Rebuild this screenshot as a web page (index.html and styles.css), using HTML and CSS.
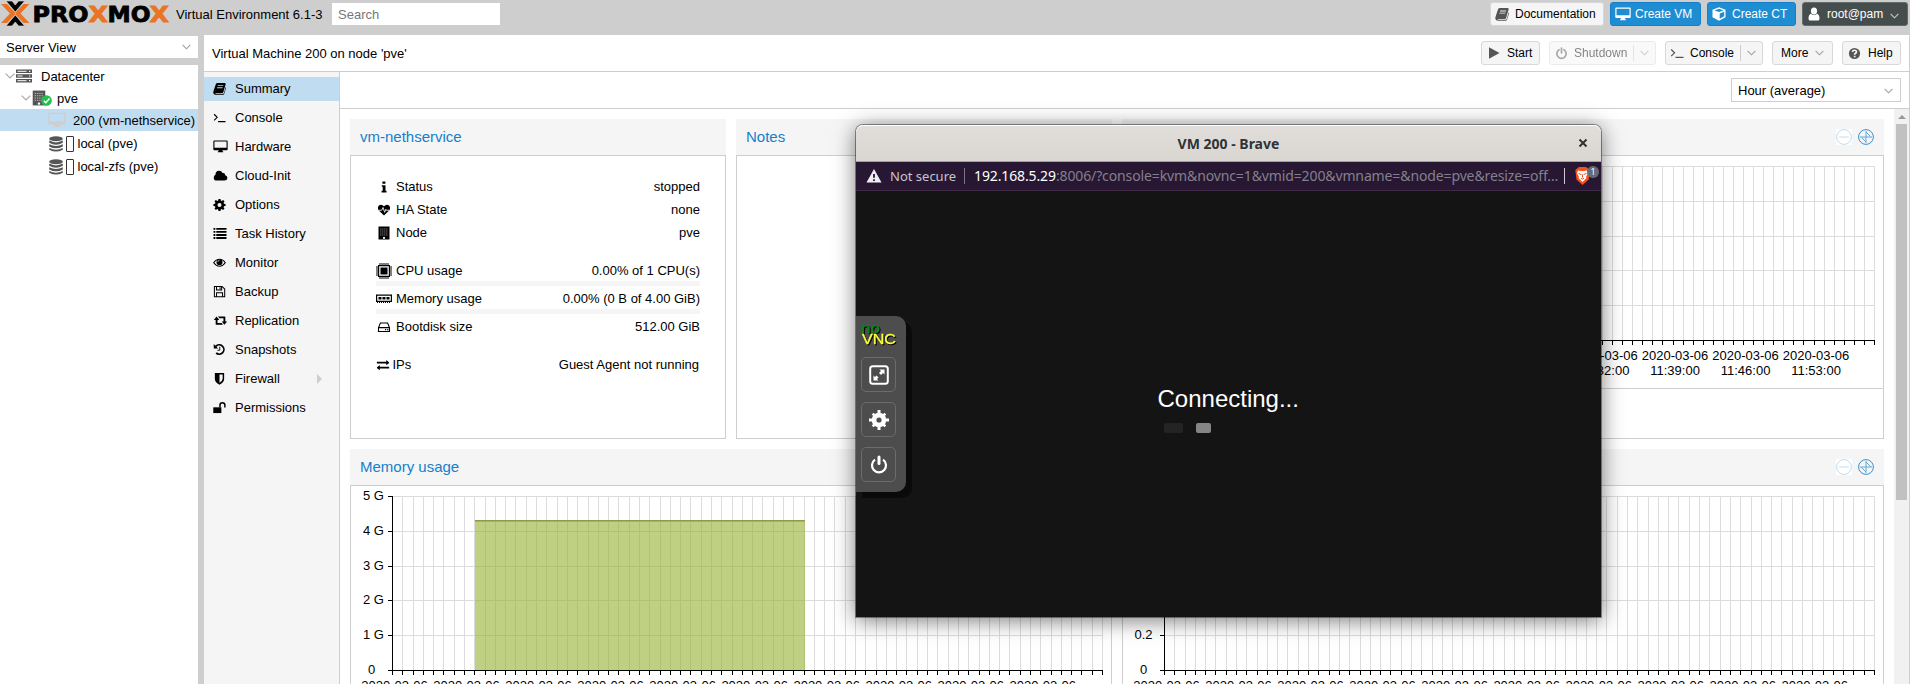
FILE: index.html
```html
<!DOCTYPE html>
<html lang="en">
<head>
<meta charset="utf-8">
<title>pve - Proxmox Virtual Environment</title>
<link rel="stylesheet" href="styles.css">
</head>
<body>
<svg class="sprite" aria-hidden="true">
  <symbol id="book" viewBox="0 0 14 14"><path fill-rule="evenodd" d="M5 1h7.5q1.5.1 1.1 1.5l-2.500 8.500q-.3 1-1.400 1H2.400q.1.800 1 .8h7.300q.8 0 1-.8l2-6.700q.5.400.3 1.200l-2 6.300q-.3 1-1.400 1H2.700Q.5 13.600.3 11.500l.1-1.300L3 2.300Q3.500 1 5 1zM5.300 3.500l-.3.900h5.900l.3-.900zM4.600 5.700l-.3.900h5.900l.3-.900z"/></symbol>
  <symbol id="term" viewBox="0 0 14 14"><path fill="none" stroke="currentColor" stroke-width="1.200" d="M1.200 3.500 4.500 6.800 1.200 10.100M5.500 11.400h8"/></symbol>
  <symbol id="desktop" viewBox="0 0 16 14"><path fill-rule="evenodd" d="M1.300.5h13.400q1 0 1 1v8.500q0 1-1 1H10q0 1.200.9 1.400v.9H5.100v-.9Q6 12.200 6 11H1.300q-1 0-1-1V1.500q0-1 1-1zM1.500 1.700v6.600h13V1.700z"/></symbol>
  <symbol id="cloud" viewBox="0 0 15 14"><path d="M3.600 12.500Q.2 12.300.2 9.300.3 7.200 2.100 6.300 2 2.300 5.800 2 8.600 1.900 9.800 4.300 12.300 3.800 12.600 6.600 14.900 7.200 14.900 9.500 14.800 12.300 11.900 12.500z"/></symbol>
  <symbol id="cog" viewBox="0 0 14 14"><path fill-rule="evenodd" d="M5.900 1h2.200l.3 1.700 1 .4 1.500-1 1.500 1.500-1 1.500.4 1 1.700.3v2.200l-1.700.3-.4 1 1 1.500-1.500 1.500-1.500-1-1 .4-.3 1.700H5.900l-.3-1.700-1-.4-1.500 1-1.500-1.500 1-1.500-.4-1L.5 8.600V6.400l1.700-.3.400-1-1-1.500 1.500-1.500 1.500 1 1-.4zM7 5.300a2.200 2.200 0 1 0 0 4.400 2.200 2.200 0 0 0 0-4.400z"/></symbol>
  <symbol id="list" viewBox="0 0 14 14"><path d="M0 1h2v2H0zM3 1h11v2H3zM0 4.300h2v2H0zM3 4.300h11v2H3zM0 7.600h2v2H0zM3 7.600h11v2H3zM0 10.900h2v2H0zM3 10.900h11v2H3z"/></symbol>
  <symbol id="eye" viewBox="0 0 14 14"><path fill="none" stroke="currentColor" stroke-width="1.200" d="M.8 7.300Q3.300 3.500 7 3.500t6.200 3.800Q10.700 11 7 11T.8 7.300z"/><circle cx="7" cy="6.600" r="3.200"/><path d="M5.100 6.500Q5.200 4.700 7 4.700" stroke="#f5f5f5" stroke-width=".7" fill="none"/></symbol>
  <symbol id="save" viewBox="0 0 14 14"><path fill="none" stroke="currentColor" stroke-width="1.100" d="M1.500 1.600h8.300l2.800 2.800v8.200H1.500zM3.800 1.800v3.600h5.500V1.800M3.800 12.400V8.300h6.500v4.100M7.600 2.500v2"/></symbol>
  <symbol id="retweet" viewBox="0 0 15 14"><path d="M3.300 2.800 6.200 6.400H4.300v3.300h4.400l1.500 1.900H2.800q-.5 0-.5-.5V6.400H.3zM4.800 2.800h7.400q.5 0 .5.500V8h2l-3 3.600L8.800 8h1.900V4.700H6.300z"/></symbol>
  <symbol id="history" viewBox="0 0 14 14"><path fill="none" stroke="currentColor" stroke-width="1.900" d="M3 3.700A5 5 0 1 1 3.400 10.800"/><path d="M.8 1v4.800h4.800z"/><path d="M7.300 4v3.800H4.800" fill="none" stroke="currentColor"/></symbol>
  <symbol id="shield" viewBox="0 0 14 14"><path fill-rule="evenodd" d="M2 1h10v6.500q-.2 3.700-5 6.200Q2.200 11.200 2 7.500zM7 2.700v9q3.300-2 3.400-4.300V2.700z"/></symbol>
  <symbol id="unlock" viewBox="0 0 14 14"><path d="M.3 6.800h8.700v6.200H.3z"/><path fill="none" stroke="currentColor" stroke-width="1.600" d="M7.500 7V4.500a2.600 2.600 0 0 1 5.300 0V7"/></symbol>
  <symbol id="info" viewBox="0 0 14 14"><path d="M5.300 1h3.200v2.500H5.300zM4.600 5h4v6h1.100v1.800H4.400V11h1.200V6.800h-1z"/></symbol>
  <symbol id="heart" viewBox="0 0 14 14"><path d="M7 13 1.500 7.600Q.2 6 .4 4.200.9 1.500 3.500 1.300 5.500 1.200 7 3 8.500 1.200 10.500 1.300 13.100 1.500 13.600 4.200q.2 1.800-1.100 3.400z"/><path d="M1 7.300h3.500L6 4.300l1.700 5.200 1.200-3.300.6 1.100h3" fill="none" stroke="#fff" stroke-width=".9"/></symbol>
  <symbol id="building" viewBox="0 0 12 14"><path d="M.5.500h11v13h-11z"/><path d="M2.200 3h7.600M2.200 5h7.600M2.200 7h7.600M2.200 9h7.600" stroke="#fff" stroke-width=".8" stroke-dasharray="1.200 .8" opacity=".65"/><path fill="#fff" d="M5 11h2v1.800H5z"/></symbol>
  <symbol id="cpu" viewBox="0 0 16 16"><path d="M4.500 4.500h7v7h-7z"/><path fill="none" stroke="currentColor" stroke-width="1.200" d="M2.600 2.600h10.800v10.800H2.600z"/><path stroke="currentColor" stroke-width="2" stroke-dasharray="1 1" d="M3.500 1h9M3.500 15h9M1 3.500v9M15 3.500v9"/></symbol>
  <symbol id="ram" viewBox="0 0 16 10"><path fill="none" stroke="currentColor" stroke-width="1.200" d="M.6 1.100h14.800v6.300H.6z"/><path d="M2.500 3h3v2.600h-3zM6.500 3h3v2.600h-3zM10.500 3h3v2.600h-3z"/><path stroke="currentColor" stroke-width="1.200" stroke-dasharray="1 1" d="M1 8.400h14"/></symbol>
  <symbol id="disk" viewBox="0 0 14 14"><path fill="none" stroke="currentColor" stroke-width="1.100" d="M1.500 7.600 3.400 3h7.200l1.900 4.600v3.900h-11zM1.500 7.600h11"/><path d="M8 9h1.200v1.200H8zM10.200 9h1.200v1.200h-1.200z"/></symbol>
  <symbol id="exchange" viewBox="0 0 14 14"><path d="M0 3.600h10.500V1.700L14 4.500l-3.500 2.700V5.400H0zM14 8.900H3.500V7.100L0 9.900l3.500 2.700v-1.900H14z"/></symbol>
  <symbol id="cube" viewBox="0 0 14 14"><path fill-rule="evenodd" d="M7 .3 13.500 2.700v7.500L7 13.700.5 10.200V2.700zM7 1.700 2.500 3.400 7 5.100l4.500-1.700zM7.700 6.400v5.300l4.500-2.400V4.700z"/></symbol>
  <symbol id="user" viewBox="0 0 12 14"><ellipse cx="6" cy="4" rx="3.100" ry="3.600"/><path d="M2.800 6.700Q6 9.300 9.200 6.700q2.300 1 2.300 4.700 0 2.200-1.800 2.200H2.300Q.5 13.600.5 11.400q0-3.700 2.300-4.700z"/></symbol>
  <symbol id="play" viewBox="0 0 12 14"><path d="M1 1.300 11.500 7 1 12.700z"/></symbol>
  <symbol id="power" viewBox="0 0 14 14"><path fill="none" stroke="currentColor" stroke-width="1.900" stroke-linecap="round" d="M4.300 3a5 5 0 1 0 5.400 0M7 1.200v5"/></symbol>
  <symbol id="help" viewBox="0 0 14 14"><circle cx="7" cy="7" r="6"/><path fill="none" stroke="#f5f5f5" stroke-width="1.800" d="M4.700 5.300Q5 3.500 7 3.500t2.200 1.700Q9.200 6.200 7.200 7.500v.9M7.200 9.300v1.700"/></symbol>
  <symbol id="down" viewBox="0 0 10 6"><path fill="none" stroke="currentColor" stroke-width="1.200" d="M.7.700 5 5 9.300.7"/></symbol>
  <symbol id="db" viewBox="0 0 14 16"><ellipse cx="7" cy="2.700" rx="6.800" ry="2.500"/><path d="M.2 4.600Q7 8.200 13.800 4.600v2.100Q7 10.700.2 6.700zM.2 8.300q6.800 3.600 13.600 0v2.100Q7 14.200.2 10.400zM.2 12q6.800 3.600 13.600 0v1.700Q7 17.400.2 13.700z"/></symbol>
  <symbol id="server" viewBox="0 0 16 14"><path d="M0 .5h16v3.600H0zM0 5.200h16v3.600H0zM0 9.900h16v3.600H0z"/><path stroke="#fff" d="M1.500 2.300h9M1.500 7h5M1.500 11.700h9"/><path stroke="#fff" stroke-width="1.200" d="M13 2.300h1.300M13 7h1.300M13 11.700h1.300"/></symbol>
  <symbol id="minus" viewBox="0 0 16 16"><path fill="#fff" stroke="none" d="M0 0h16v16H0z"/><circle cx="8" cy="8" r="7.400"/><path d="M3.200 8h9.600"/></symbol>
  <symbol id="zoomreset" viewBox="0 0 16 16"><circle cx="8" cy="8" r="7.400"/><path stroke="#62a7d6" d="M8 2v12M2 8h12M8 3l4.500 4.500M8 13 3.500 8.500"/></symbol>
</svg>

<header class="top">
  <svg class="logo" width="170" height="27" viewBox="0 0 170 27">
    <path fill="#e97425" d="M1 4h6l9 9.500L7 23H1l9-9.500zM29.500 4h-6l-9 9.500 9 9.500h6l-9-9.500z"/>
    <path fill="#000" stroke="#cecece" stroke-width=".7" d="M6 1h6l3.300 4L18.600 1h6l-9.300 11zM6 26h6l3.300-4 3.300 4h6l-9.300-11z"/>
    <g class="wordmark"><text x="32.500" y="21.500" textLength="56" lengthAdjust="spacingAndGlyphs">PRO</text><text class="x" x="88.500" y="21.500" textLength="19.500" lengthAdjust="spacingAndGlyphs">X</text><text x="107.500" y="21.500" textLength="43" lengthAdjust="spacingAndGlyphs">MO</text><text class="x" x="149.500" y="21.500" textLength="19.500" lengthAdjust="spacingAndGlyphs">X</text></g>
  </svg>
  <span class="version">Virtual Environment 6.1-3</span>
  <div class="search">Search</div>
  <div class="top-actions">
    <div class="btn doc"><svg width="14" height="14"><use href="#book"/></svg><span>Documentation</span></div>
    <div class="btn blue vm"><svg width="16" height="14"><use href="#desktop"/></svg><span>Create VM</span></div>
    <div class="btn blue ct"><svg width="14" height="14"><use href="#cube"/></svg><span>Create CT</span></div>
    <div class="btn user"><svg width="12" height="14"><use href="#user"/></svg><span>root@pam</span><svg class="caret" width="9" height="6"><use href="#down"/></svg></div>
  </div>
</header>

<div class="workspace">
  <aside class="side">
    <div class="view-select"><span>Server View</span><svg class="caret" width="9" height="6"><use href="#down"/></svg></div>
    <div class="tree">
      <div class="row"><svg class="arrow" width="10" height="6"><use href="#down"/></svg><svg class="ico" width="16" height="14"><use href="#server"/></svg><span class="t-dc">Datacenter</span></div>
      <div class="row d1"><svg class="arrow" width="10" height="6"><use href="#down"/></svg><span class="node"><svg class="ico" width="14" height="16"><use href="#building"/></svg><svg class="ok" width="11" height="11" viewBox="0 0 11 11"><circle cx="5.500" cy="5.500" r="5.300" fill="#21bf4b"/><path d="m2.800 5.700 2 2 3.700-4.200" fill="none" stroke="#fff" stroke-width="1.500"/></svg></span><span>pve</span></div>
      <div class="row d2 sel"><svg width="18" height="16"><use href="#desktop"/></svg><span>200 (vm-nethservice)</span></div>
      <div class="row d2 st"><svg class="ico" width="14" height="16"><use href="#db"/></svg><i class="box"></i><span>local (pve)</span></div>
      <div class="row d2 st"><svg class="ico" width="14" height="16"><use href="#db"/></svg><i class="box"></i><span>local-zfs (pve)</span></div>
    </div>
  </aside>

  <main class="main">
    <div class="title">
      <span>Virtual Machine 200 on node 'pve'</span>
      <div class="vm-actions">
        <div class="btn start"><svg width="12" height="14"><use href="#play"/></svg><span>Start</span></div>
        <div class="btn shutdown"><svg width="13" height="13"><use href="#power"/></svg><span>Shutdown</span><i class="split"></i><svg class="caret" width="9" height="6"><use href="#down"/></svg></div>
        <div class="btn console"><svg width="14" height="14"><use href="#term"/></svg><span>Console</span><i class="split"></i><svg class="caret" width="9" height="6"><use href="#down"/></svg></div>
        <div class="btn more"><span>More</span><svg class="caret" width="9" height="6"><use href="#down"/></svg></div>
        <div class="btn help"><svg width="13" height="13"><use href="#help"/></svg><span>Help</span></div>
      </div>
    </div>
    <div class="content">
      <nav class="nav">
        <div class="item on"><svg width="13" height="13"><use href="#book"/></svg>Summary</div>
        <div class="item"><svg width="13" height="13"><use href="#term"/></svg>Console</div>
        <div class="item"><svg width="15" height="13"><use href="#desktop"/></svg>Hardware</div>
        <div class="item"><svg width="15" height="13"><use href="#cloud"/></svg>Cloud-Init</div>
        <div class="item"><svg width="13" height="13"><use href="#cog"/></svg>Options</div>
        <div class="item"><svg width="14" height="13"><use href="#list"/></svg>Task History</div>
        <div class="item"><svg width="13" height="13"><use href="#eye"/></svg>Monitor</div>
        <div class="item"><svg width="13" height="13"><use href="#save"/></svg>Backup</div>
        <div class="item"><svg width="15" height="13"><use href="#retweet"/></svg>Replication</div>
        <div class="item"><svg width="13" height="13"><use href="#history"/></svg>Snapshots</div>
        <div class="item"><svg width="13" height="13"><use href="#shield"/></svg>Firewall<i class="sub"></i></div>
        <div class="item"><svg width="13" height="13"><use href="#unlock"/></svg>Permissions</div>
      </nav>
      <section class="view">
        <div class="toolbar"><div class="combo"><span>Hour (average)</span><svg class="caret" width="9" height="6"><use href="#down"/></svg></div></div>
        <div class="scroll">
          <div class="panels">
            <div class="panel status">
              <h2>vm-nethservice</h2>
              <div class="body info">
                <div class="stat"><svg width="14" height="13"><use href="#info"/></svg><span>Status</span><b>stopped</b></div>
                <div class="stat"><svg width="14" height="13"><use href="#heart"/></svg><span>HA State</span><b>none</b></div>
                <div class="stat"><svg width="14" height="14"><use href="#building"/></svg><span>Node</span><b>pve</b></div>
                <div class="stat gap"><svg width="16" height="16"><use href="#cpu"/></svg><span>CPU usage</span><b>0.00% of 1 CPU(s)</b></div>
                <i class="meter"></i>
                <div class="stat"><svg width="16" height="10"><use href="#ram"/></svg><span>Memory usage</span><b>0.00% (0 B of 4.00 GiB)</b></div>
                <i class="meter"></i>
                <div class="stat"><svg width="14" height="14"><use href="#disk"/></svg><span>Bootdisk size</span><b>512.00 GiB</b></div>
                <div class="stat gap ips"><svg width="13" height="14"><use href="#exchange"/></svg><span>IPs</span><b>Guest Agent not running</b></div>
              </div>
            </div>
            <div class="panel notes"><h2>Notes</h2><div class="body"></div></div>
            <div class="panel cpu"><h2>CPU usage<span class="tools"><svg class="t-minus" width="16" height="16"><use href="#minus"/></svg><svg class="t-zoom" width="16" height="16"><use href="#zoomreset"/></svg></span></h2><div class="body"><svg class="chart" width="760" height="232" data-left="56" data-right="751" data-ticks="1 0.8 0.6 0.4 0.2 0"></svg><i class="legend"></i></div></div>
            <div class="panel mem"><h2>Memory usage</h2><div class="body"><svg class="chart" width="760" height="232" data-left="41" data-right="751" data-ticks="5_G 4_G 3_G 2_G 1_G 0" data-area="1"></svg></div></div>
            <div class="panel net"><h2>Network traffic<span class="tools"><svg class="t-minus" width="16" height="16"><use href="#minus"/></svg><svg class="t-zoom" width="16" height="16"><use href="#zoomreset"/></svg></span></h2><div class="body"><svg class="chart" width="760" height="232" data-left="41" data-right="751" data-ticks="1 0.8 0.6 0.4 0.2 0"></svg></div></div>
          </div>
          <div class="scrollbar"><i class="up"></i><i class="thumb"></i></div>
        </div>
      </section>
    </div>
  </main>
</div>

<div class="window">
  <div class="titlebar"><span>VM 200 - Brave</span><svg width="10" height="10" viewBox="0 0 10 10"><path d="m1.500 1.500 7 7m0-7-7 7" stroke="#2e3436" stroke-width="2"/></svg></div>
  <div class="urlbar">
    <svg class="warn" width="16" height="14" viewBox="0 0 16 14"><path fill="#f0edf2" d="M8 0 15.500 13.500H.5z"/><path stroke="#271733" stroke-width="1.800" d="M8 5v3.800M8 10.200v1.700"/></svg>
    <span class="insecure">Not secure</span><i class="bar"></i>
    <span class="url"><b>192.168.5.29</b>:8006/?console=kvm&amp;novnc=1&amp;vmid=200&amp;vmname=&amp;node=pve&amp;resize=off…</span>
    <i class="bar light"></i>
    <div class="brave"><svg width="15" height="18" viewBox="0 0 15 18"><path fill="#f4511e" d="M4 0h7l3.700 3-1 9.500L7.500 18l-6-5.500L.3 3z"/><path fill="#fff" d="m3 3.500 3 .5h3l3-.5 1 2.500-2 4 .5 1-4 4-4-4 .5-1-2-4z"/><path stroke="#f4511e" fill="none" d="m3.500 6.500 3 1M11.500 6.500l-3 1M6 11.300l1.500.8 1.500-.8M7.500 7.500v3"/></svg><em>1</em></div>
  </div>
  <div class="screen">
    <div class="vnc">
      <svg class="novnc" width="38" height="24" viewBox="0 0 38 24"><text class="no" x="0" y="9" textLength="19" lengthAdjust="spacingAndGlyphs">no</text><text class="v" x="1" y="20" textLength="34" lengthAdjust="spacingAndGlyphs">VNC</text></svg>
      <div class="vbtn"><svg width="20" height="20" viewBox="0 0 20 20"><rect x="1.200" y="1.200" width="17.600" height="17.600" rx="2.500" fill="none" stroke="#fff" stroke-width="2"/><path fill="#fff" d="M10.500 4.500h5v5L14 8l-2 2-2-2 2-2zM4.500 10.500 6 12l1.500-1.500 2 2L8 14l1.500 1.500h-5z"/></svg></div>
      <div class="vbtn"><svg width="20" height="20" viewBox="0 0 20 20"><path id="teeth" fill="#fff" d="M8.500 0h3v20h-3zM0 8.500h20v3H0z"/><use href="#teeth" transform="rotate(45 10 10) translate(1 1) scale(.9)"/><circle cx="10" cy="10" r="7.300" fill="#fff"/><circle cx="10" cy="10" r="2.600" fill="#4d4d4d"/></svg></div>
      <div class="vbtn"><svg width="20" height="20" viewBox="0 0 20 20"><path fill="none" stroke="#fff" stroke-width="2.200" d="M6 4.700a7 7 0 1 0 8 0"/><path fill="none" stroke="#fff" stroke-width="3" stroke-linecap="round" d="M10 2v6.500"/></svg></div>
    </div>
    <div class="connecting"><span>Connecting...</span><div class="dots"><i></i><i></i></div></div>
  </div>
</div>
<script src="charts.js"></script>
</body>
</html>
```
FILE: styles.css
```css
* { box-sizing: border-box; }
body { margin: 0; width: 1910px; height: 684px; overflow: hidden; background: #cecece; color: #000; font: 13px/17px "Liberation Sans", Arial, sans-serif; position: relative; }
svg { flex: none; fill: currentColor; }
i, em { font-style: normal; flex: none; }
b { font-weight: normal; }
span { white-space: nowrap; }
.sprite { position: absolute; width: 0; height: 0; }
.caret { color: #a0a0a0; }

.top { height: 35px; display: flex; align-items: flex-start; }
.logo { display: block; }
.wordmark { font: bold 21.5px "DejaVu Sans", sans-serif; fill: #000; stroke: #000; stroke-width: .8; }
.wordmark .x { fill: #e97425; stroke: #e97425; }
.version { width: 162px; padding: 6px 0 0 6px; }
.search { width: 168px; height: 22px; margin-top: 3px; padding: 3px 6px; background: #fff; color: #777; }
.top-actions { margin-left: auto; padding: 2px 2px 0 0; display: flex; gap: 6px; }
.btn { height: 24px; display: flex; align-items: center; border: 1px solid #d8d8d8; border-radius: 3px; background: #f5f5f5; font-size: 12px; line-height: 15px; }
.btn svg { color: #555; }
.btn .caret { color: #a0a0a0; }
.doc { width: 114px; padding-left: 4px; gap: 6px; }
.blue { background: #1f8dd2; border-color: #157fcc; color: #fff; }
.blue svg, .user svg { color: #fff; }
.vm { width: 91px; padding-left: 4px; gap: 4px; }
.ct { width: 89px; padding-left: 4px; gap: 6px; }
.user { width: 106px; padding-left: 5px; gap: 7px; background: #464d4d; border-color: #5f6b6b; color: #fff; }
.user .caret { color: #ccc; margin-top: 3px; }

.workspace { display: flex; height: 649px; }
.side { width: 198px; margin-right: 6px; padding-top: 1px; display: flex; flex-direction: column; gap: 7px; }
.view-select { height: 22px; padding: 0 7px 0 6px; background: #fff; display: flex; align-items: center; justify-content: space-between; }
.tree { flex: 1; background: #fff; }
.row { height: 22px; padding-left: 5px; display: flex; align-items: center; }
.arrow { color: #aaa; margin-right: 1px; }
.ico { color: #555; }
.t-dc { margin-left: 9px; }
.d1 { padding-left: 21px; }
.node { position: relative; width: 25px; height: 16px; }
.node .ico { display: block; }
.ok { position: absolute; left: 9px; top: 5px; }
.d2 { padding-left: 48px; }
.sel { background: #c0dcf0; color: #000; gap: 7px; }
.sel svg { color: #cecece; }
.st { height: 23px; padding-left: 49px; }
.sel + .st { margin-top: 1px; }
.box { width: 8px; height: 16px; border: 1px solid #333; border-radius: 1px; margin: 0 3.500px 0 3px; }

.main { flex: 1; background: #fff; border-right: 1px solid #cecece; display: flex; flex-direction: column; }
.title { height: 37px; padding: 0 8px 0 8px; display: flex; align-items: center; justify-content: space-between; border-bottom: 1px solid #cecece; }
.vm-actions { display: flex; gap: 9px; }
.start { width: 59px; padding-left: 6px; gap: 7px; }
.shutdown { width: 107px; padding-left: 5px; gap: 6px; opacity: .5; }
.split { width: 1px; height: 16px; background: #ccc; }
.console { width: 98px; padding-left: 4px; gap: 6px; }
.more { width: 61px; padding-left: 8px; gap: 7px; }
.help { width: 59px; padding-left: 5px; gap: 7px; }
.content { flex: 1; display: flex; min-height: 0; }
.nav { width: 136px; background: #f5f5f5; border-right: 1px solid #cecece; padding-top: 5px; display: flex; flex-direction: column; gap: 5px; }
.item { height: 24px; display: flex; align-items: center; position: relative; padding: 0 0 1px 31px; }
.item svg { position: absolute; left: 9px; top: 5px; }
.item.on { background: #c0dcf0; }
.sub { margin-left: auto; margin-right: 17px; border: 5px solid transparent; border-left-color: #cecece; border-right: 0; }
.view { flex: 1; display: flex; flex-direction: column; min-width: 0; }
.toolbar { height: 37px; border-bottom: 1px solid #cecece; display: flex; justify-content: flex-end; align-items: center; padding-right: 8px; }
.combo { width: 170px; height: 24px; border: 1px solid #cecece; padding: 1px 7px 0 6px; display: flex; align-items: center; justify-content: space-between; }
.scroll { flex: 1; min-height: 0; display: flex; overflow: hidden; }
.panels { flex: 1; padding: 10px 10px 0; display: flex; flex-wrap: wrap; align-content: flex-start; gap: 10px; }
.panel { width: 762px; }
.status, .notes { width: 376px; }
.panel h2 { margin: 0; height: 36px; padding: 0 10px; background: #f5f5f5; color: #157fcc; font: 15px/36px "Liberation Sans", Arial, sans-serif; display: flex; justify-content: space-between; }
.body { height: 284px; border: 1px solid #cecece; }
.tools { display: flex; align-items: center; gap: 6px; }
.tools svg { fill: none; }
.t-minus { stroke: #bfdcf0; }
.t-zoom { stroke: #3c8fca; }
.info { padding: 19px 25px 0; }
.stat { height: 23px; display: flex; align-items: center; position: relative; padding-left: 20px; }
.stat svg { position: absolute; left: 8px; top: 50%; transform: translate(-50%, -50%); }
.stat b { margin-left: auto; }
.gap { margin-top: 15px; }
.meter { display: block; height: 5px; background: #f5f5f5; margin-top: -1px; }
.meter + .stat { margin-top: 1px; }
.ips { padding-left: 16.500px; padding-right: 1px; }
.ips svg { left: 6.500px; }
.chart { display: block; font: 13px "Liberation Sans", Arial, sans-serif; }
.grid { stroke: #dcdcdc; fill: none; shape-rendering: crispEdges; }
.axis { stroke: #000; fill: none; shape-rendering: crispEdges; }
.area { fill: #94ae0a; fill-opacity: .6; fill: #94b12f; }
.line { stroke: #899c4a; stroke-width: 1.500; }
.legend { display: block; border-top: 1px solid #cecece; }
.scrollbar { width: 15px; background: #f1f1f1; display: flex; flex-direction: column; align-items: center; padding-top: 6px; }
.up { border: 4px solid transparent; border-bottom-color: #9a9a9a; border-top: 0; }
.thumb { width: 11px; height: 376px; margin-top: 5px; background: #c1c1c1; }

.window { position: absolute; left: 856px; top: 125px; width: 745px; height: 492px; border-radius: 7px 7px 0 0; box-shadow: 0 0 0 1px rgba(0,0,0,.4), 0 3px 22px rgba(0,0,0,.55); overflow: visible; display: flex; flex-direction: column; }
.titlebar { height: 37px; border-radius: 7px 7px 0 0; background: linear-gradient(#e1dedb, #d9d5d0); border-top: 1px solid #fff; border-bottom: 1px solid #aaa098; display: flex; align-items: center; justify-content: center; position: relative; color: #2e3436; font: bold 14px "Noto Sans", sans-serif; }
.titlebar svg { position: absolute; right: 13px; top: 12px; }
.urlbar { height: 29px; background: #271733; border-bottom: 1px solid #412a45; display: flex; align-items: center; font: 14px/20px "Noto Sans", sans-serif; color: #c9c3cf; }
.warn { margin: 0 8px 0 10px; }
.insecure { width: 74px; font-size: 13px; }
.bar { width: 1px; height: 16px; background: #7d7485; }
.bar.light { background: #d0c8d0; }
.url { width: 599px; padding-left: 9px; color: #85808a; letter-spacing: -.12px; }
.url b { color: #fff; }
.brave { position: relative; height: 18px; margin-left: 10px; }
.brave svg { display: block; }
.brave em { position: absolute; left: 12px; top: -1px; width: 12px; height: 12px; border-radius: 6px; background: #666b78; color: #fff; font-size: 9px; line-height: 12px; text-align: center; }
.screen { flex: 1; background: #141414; position: relative; }
.vnc { position: absolute; left: 0; top: 125px; width: 50px; height: 176px; padding: 8px 10px 0 5px; background: #4d4d4d; border-radius: 0 10px 10px 0; box-shadow: 6px 6px 0 rgba(0,0,0,.5); display: flex; flex-direction: column; gap: 10px; }
.novnc { display: block; margin-bottom: -1px; filter: drop-shadow(1px 1px 0 #000); }
.no { font: 14px "DejaVu Sans", sans-serif; fill: #0a8a1e; stroke: #0a8a1e; stroke-width: .4; }
.v { font: 14px "Liberation Sans", sans-serif; fill: #ffff3c; stroke: #ffff3c; stroke-width: .3; }
.vbtn { width: 35px; height: 35px; border: 1px solid #6b6b6b; border-radius: 5px; display: flex; align-items: center; justify-content: center; }
.connecting { padding: 192px 0 0 301.500px; color: #fff; font-size: 24px; line-height: 32px; }
.dots { display: flex; gap: 13px; padding: 8px 0 0 6.500px; }
.dots i { width: 19px; height: 10px; border-radius: 2px; background: #242424; }
.dots i + i { width: 15px; background: #858585; }
```
FILE: charts.js
```js
// Draws the grid, axes and labels of each time chart.
const TOP = 10, BOTTOM = 184, STEPS = 69;
const times = ['10:50', '10:57', '11:04', '11:11', '11:18', '11:25', '11:32', '11:39', '11:46', '11:53'];
document.querySelectorAll('.chart').forEach(svg => {
  const left = +svg.dataset.left, right = +svg.dataset.right;
  const xs = Array.from({ length: STEPS + 1 }, (_, i) => Math.round(left + (right - left) * i / STEPS) + .5);
  const ys = [10, 45, 80, 114, 149, 184].map(y => y + .5);
  let out = '<path class="grid" d="' + xs.map(x => `M${x} ${TOP}V${BOTTOM}`).join('') +
    ys.map(y => `M${left} ${y}H${right + 1}`).join('') + '"/>';
  if (svg.dataset.area) {
    out += '<path class="area" d="M124 34.500H454V184H124z"/><path class="line" d="M124 34.700H454"/>';
  }
  out += `<path class="axis" d="M${left + .5} ${TOP}V${BOTTOM}M${left - 4} ${BOTTOM + .5}H${right + 1}` +
    ys.map(y => `M${left - 4} ${y}H${left}`).join('') + xs.map(x => `M${x} ${BOTTOM}v5`).join('') + '"/>';
  svg.dataset.ticks.split(' ').forEach((t, i) => {
    const shift = t.includes('_') ? 18.500 : 20.500;
    out += `<text x="${left - shift}" y="${ys[i] + 3.800}" text-anchor="middle">${t.replace('_', ' ')}</text>`;
  });
  times.forEach((t, i) => {
    const x = left + (right - left) * i * 7 / STEPS + 2.500;
    out += `<text x="${x}" y="204" text-anchor="middle">2020-03-06</text><text x="${x}" y="219" text-anchor="middle">${t}:00</text>`;
  });
  svg.innerHTML = out;
});
```
